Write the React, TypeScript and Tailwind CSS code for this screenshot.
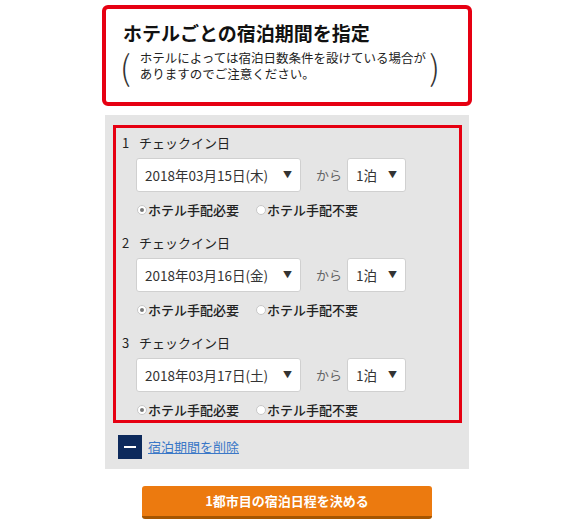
import React from "react";

const font = { fontFamily: '"Noto Sans CJK JP", "Noto Sans", sans-serif' };

const periods = [
  { no: 1, date: "2018年03月15日(木)" },
  { no: 2, date: "2018年03月16日(金)" },
  { no: 3, date: "2018年03月17日(土)" },
];

function Radio({ checked, label }: { checked: boolean; label: string }) {
  return (
    <label className="flex items-center text-[13px] font-medium text-[#222]">
      <span className="w-[10px] h-[10px] rounded-full border border-[#c8c8c8] bg-white flex items-center justify-center mr-[1px]">
        {checked && <span className="w-[4px] h-[4px] rounded-full bg-[#777]" />}
      </span>
      {label}
    </label>
  );
}

function Period({ no, date }: { no: number; date: string }) {
  return (
    <div className="flex flex-col">
      <div className="flex items-center h-[18px] text-[13px] text-[#222] pl-[6px]">
        <span className="w-[17px]">{no}</span>
        <span>チェックイン日</span>
      </div>
      <div className="flex items-center mt-[6px] pl-[20px]">
        <div className="w-[165px] h-[34px] bg-white border border-[#d0d0d0] rounded-[3px] flex items-center pl-[8px] pr-[8px] text-[13.5px] text-[#333]">
          <span className="flex-1">{date}</span>
          <span className="text-[9px] text-[#333]">▼</span>
        </div>
        <span className="ml-[15px] mr-[5px] text-[13px] text-[#666]">から</span>
        <div className="w-[59px] h-[34px] bg-white border border-[#d0d0d0] rounded-[3px] flex items-center pl-[8px] pr-[8px] text-[13.5px] text-[#333]">
          <span className="flex-1">1泊</span>
          <span className="text-[9px] text-[#333]">▼</span>
        </div>
      </div>
      <div className="flex items-center h-[18px] mt-[9px] pl-[21px] gap-[17px]">
        <Radio checked label="ホテル手配必要" />
        <Radio checked={false} label="ホテル手配不要" />
      </div>
    </div>
  );
}

export default function App() {
  return (
    <main className="w-[570px] h-[525px] bg-white overflow-hidden" style={font}>
      <div className="ml-[102px] w-[370px] pt-[5px]">
        <section className="h-[101px] border-4 border-[#e60012] rounded-[6px] px-[14px] pt-[11px]">
          <h1 className="text-[19px] font-bold text-[#111] leading-[26px] pl-[3px]">ホテルごとの宿泊期間を指定</h1>
          <div className="flex items-center mt-[4px]">
            <span className="text-[34px] font-extralight leading-[32px] text-[#333]">(</span>
            <p className="flex-1 pl-[9px] text-[12.5px] leading-[16px] text-[#222]">
              ホテルによっては宿泊日数条件を設けている場合が
              <br />
              ありますのでご注意ください。
            </p>
            <span className="text-[34px] font-extralight leading-[32px] text-[#333] mr-[14px]">)</span>
          </div>
        </section>

        <section className="mt-[9px] mx-[3px] bg-[#e5e5e5] pt-[10px] pb-[10px] pl-[8px] pr-[7px]">
          <div className="border-[3px] border-[#e60012] pt-[6px] pb-[1px] flex flex-col gap-[15px]">
            {periods.map((p) => (
              <Period key={p.no} no={p.no} date={p.date} />
            ))}
          </div>
          <div className="flex items-center mt-[12px] pl-[5px]">
            <div className="w-[24px] h-[24px] bg-[#0d2a5c] flex items-center justify-center">
              <span className="w-[12px] h-[2px] bg-white" />
            </div>
            <a href="#" className="ml-[6px] text-[13px] text-[#3b78c7] underline">宿泊期間を削除</a>
          </div>
        </section>

        <div className="mt-[17px] flex justify-center">
          <button className="w-[290px] h-[33px] rounded-[3px] bg-[#ec7a0f] border-b-[3px] border-[#a65500] text-white text-[13px] font-bold">
            1都市目の宿泊日程を決める
          </button>
        </div>
      </div>
    </main>
  );
}
